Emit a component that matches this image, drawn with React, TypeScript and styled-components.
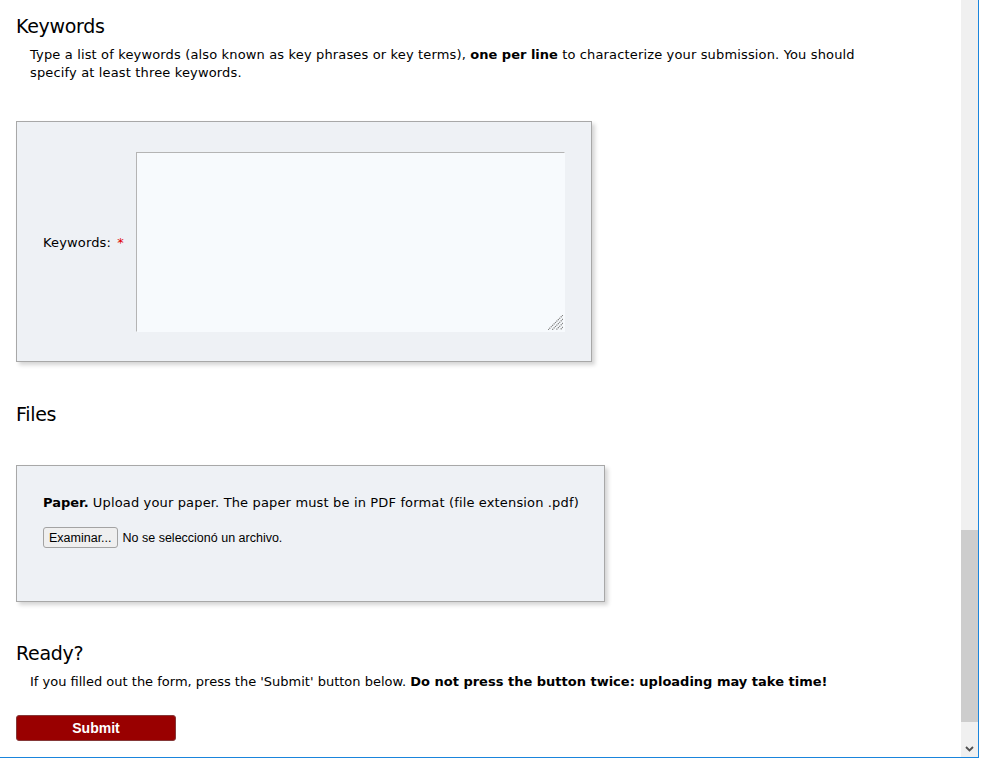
import React from "react";
import styled, { createGlobalStyle } from "styled-components";

const GlobalStyle = createGlobalStyle`
  html, body {
    margin: 0;
    padding: 0;
    background: #ffffff;
  }
  body {
    font-family: "DejaVu Sans", Verdana, sans-serif;
    color: #000;
  }
  b {
    letter-spacing: 0;
  }
`;

const Window = styled.div`
  display: flex;
  width: 979px;
  height: 758px;
  box-sizing: border-box;
  border-right: 1px solid #1a85dc;
  border-bottom: 1px solid #1a85dc;
  overflow: hidden;
`;

const Page = styled.div`
  flex: 1;
  padding: 14px 0 0 16px;
  overflow: hidden;
`;

const SectionTitle = styled.h2<{ $top?: number }>`
  margin: ${(p) => p.$top || 0}px 0 0 0;
  font-family: "DejaVu Sans", Verdana, sans-serif;
  font-size: 19px;
  letter-spacing: -0.3px;
  font-weight: normal;
  line-height: 24px;
`;

const Help = styled.p<{ $spacing?: number }>`
  margin: 8px 0 0 14px;
  width: 850px;
  font-size: 13px;
  line-height: 18px;
  letter-spacing: ${(p) => p.$spacing ?? 0.15}px;
`;

const Panel = styled.div<{ $width: number }>`
  width: ${(p) => p.$width}px;
  box-sizing: border-box;
  background: #eef1f5;
  border: 1px solid #a8a8a8;
  box-shadow: 3px 3px 4px rgba(0, 0, 0, 0.17);
  letter-spacing: 0.15px;
`;

const KeywordPanel = styled(Panel)`
  margin-top: 39px;
  display: flex;
  align-items: center;
  padding: 30px 26px 29px;
`;

const FilePanel = styled(Panel)`
  margin-top: 39px;
  padding: 28px 26px 53px;
`;

const FieldLabel = styled.label`
  width: 93px;
  flex-shrink: 0;
  padding-top: 1px;
  font-size: 13px;
  line-height: 18px;
`;

const Required = styled.span`
  color: #e00000;
  margin-left: 2px;
`;

const AreaWrap = styled.div`
  position: relative;
  width: 429px;
  height: 180px;
`;

const KeywordArea = styled.textarea`
  display: block;
  width: 100%;
  height: 100%;
  box-sizing: border-box;
  margin: 0;
  padding: 2px 4px;
  resize: none;
  background: #f7fafd;
  border: 1px solid;
  border-color: #b4b4b4 #f7fafd #f7fafd #b4b4b4;
  font-family: "DejaVu Sans", Verdana, sans-serif;
  font-size: 13px;
  outline: none;
`;

const Grip = styled.svg`
  position: absolute;
  right: 2px;
  bottom: 2px;
  pointer-events: none;
`;

const PaperText = styled.p`
  margin: 0;
  font-size: 13px;
  line-height: 18px;
  white-space: nowrap;
`;

const FileRow = styled.div`
  display: flex;
  align-items: center;
  margin-top: 15px;
  font-family: "Liberation Sans", Arial, sans-serif;
  font-size: 12.5px;
  letter-spacing: 0;
`;

const FileButton = styled.button`
  height: 21px;
  padding: 0 5px;
  margin: 0 5px 0 0;
  background: #efefef;
  border: 1px solid #a3a3a3;
  border-radius: 3px;
  font-family: "Liberation Sans", Arial, sans-serif;
  font-size: 12.5px;
  color: #000;
`;

const SubmitButton = styled.button`
  display: block;
  margin-top: 24px;
  width: 160px;
  height: 26px;
  padding: 0;
  background: #990000;
  border: 1px solid #853838;
  border-radius: 3px;
  color: #ffffff;
  font-family: "Liberation Sans", Arial, sans-serif;
  font-weight: bold;
  font-size: 14px;
`;

const Scrollbar = styled.div`
  width: 17px;
  flex-shrink: 0;
  background: #f0f0f0;
  display: flex;
  flex-direction: column;
  justify-content: flex-end;
`;

const Thumb = styled.div`
  height: 192px;
  background: #cdcdcd;
`;

const ArrowButton = styled.div`
  height: 17px;
  margin-top: 18px;
  display: flex;
  align-items: center;
  justify-content: center;
`;

export default function App() {
  return (
    <>
      <GlobalStyle />
      <Window>
        <Page>
          <SectionTitle>Keywords</SectionTitle>
          <Help>
            Type a list of keywords (also known as key phrases or key terms),{" "}
            <b>one per line</b> to characterize your submission. You should
            specify at least three keywords.
          </Help>

          <KeywordPanel $width={576}>
            <FieldLabel>
              Keywords: <Required>*</Required>
            </FieldLabel>
            <AreaWrap>
              <KeywordArea />
              <Grip width="15" height="15" viewBox="0 0 15 15">
                <g stroke="#7c7c7c" strokeWidth="1.2" strokeDasharray="1.2 0.8">
                  <line x1="15" y1="0" x2="0" y2="15" />
                  <line x1="15" y1="4" x2="4" y2="15" />
                  <line x1="15" y1="8" x2="8" y2="15" />
                  <line x1="15" y1="12" x2="12" y2="15" />
                </g>
              </Grip>
            </AreaWrap>
          </KeywordPanel>

          <SectionTitle $top={40}>Files</SectionTitle>
          <FilePanel $width={589}>
            <PaperText>
              <b>Paper.</b> Upload your paper. The paper must be in PDF format
              (file extension .pdf)
            </PaperText>
            <FileRow>
              <FileButton type="button">Examinar...</FileButton>
              No se seleccionó un archivo.
            </FileRow>
          </FilePanel>

          <SectionTitle $top={39}>Ready?</SectionTitle>
          <Help $spacing={0}>
            If you filled out the form, press the 'Submit' button below.{" "}
            <b>Do not press the button twice: uploading may take time!</b>
          </Help>
          <SubmitButton type="button">Submit</SubmitButton>
        </Page>
        <Scrollbar>
          <Thumb />
          <ArrowButton>
            <svg width="9" height="6" viewBox="0 0 9 6">
              <path d="M1 1 L4.5 4.5 L8 1" fill="none" stroke="#505050" strokeWidth="1.8" />
            </svg>
          </ArrowButton>
        </Scrollbar>
      </Window>
    </>
  );
}
